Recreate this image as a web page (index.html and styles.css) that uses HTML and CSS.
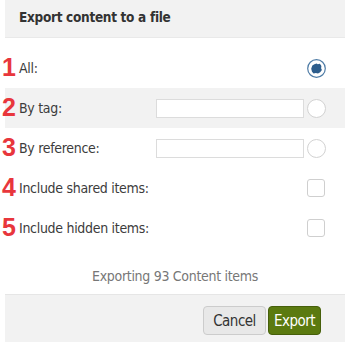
FILE: index.html
```html
<!DOCTYPE html>
<html>
<head>
<meta charset="utf-8">
<link rel="stylesheet" href="styles.css">
</head>
<body>
<div class="dialog">
  <div class="header"><span class="title">Export content to a file</span></div>
  <div class="body">
    <div class="row">
      <span class="num">1</span>
      <span class="label">All:</span>
      <svg class="radio" width="19" height="19" viewBox="0 0 19 19">
        <circle cx="9.5" cy="9.5" r="8.8" fill="#fff" stroke="#4f7ca6" stroke-width="1.2"/>
        <path d="M4.2 9.8 L5.3 6.6 L7.4 5.2 L9.6 4.4 L10.8 5.3 L12.9 4.8 L14.4 6.9 L14.1 9.2 L14.9 11 L13.2 13.2 L11 14.4 L8.9 14 L6.6 14.6 L5 12.7 Z" fill="#2d5d8c"/>
      </svg>
    </div>
    <div class="row alt">
      <span class="num">2</span>
      <span class="label">By tag:</span>
      <span class="input"></span>
      <span class="radio-off"></span>
    </div>
    <div class="row">
      <span class="num">3</span>
      <span class="label">By reference:</span>
      <span class="input"></span>
      <span class="radio-off"></span>
    </div>
    <div class="row">
      <span class="num">4</span>
      <span class="label">Include shared items:</span>
      <span class="check"></span>
    </div>
    <div class="row">
      <span class="num">5</span>
      <span class="label">Include hidden items:</span>
      <span class="check"></span>
    </div>
    <div class="status">Exporting 93 Content items</div>
  </div>
  <div class="footer">
    <button class="btn cancel">Cancel</button>
    <button class="btn export">Export</button>
  </div>
</div>
</body>
</html>
```

FILE: styles.css
```css
html, body {
  margin: 0;
  padding: 0;
  background: #fff;
}
body {
  font-family: "DejaVu Sans Condensed", "DejaVu Sans", sans-serif;
  font-stretch: condensed;
  font-size: 14px;
  letter-spacing: -0.3px;
  color: #3c3c3c;
}
.dialog {
  margin-left: 5px;
  width: 340px;
  height: 342px;
  display: flex;
  flex-direction: column;
}
.header {
  height: 38px;
  box-sizing: border-box;
  background: #f2f2f2;
  border-bottom: 1px solid #e9e9e9;
  padding: 8px 14px 0;
}
.title {
  font-weight: bold;
  font-size: 13.5px;
  color: #333;
  line-height: 18px;
}
.body {
  padding-top: 10px;
  flex: 1;
  display: flex;
  flex-direction: column;
}
.row {
  position: relative;
  height: 40px;
  display: flex;
  align-items: center;
  padding: 0 19px 0 14px;
}
.row.alt {
  background: #f2f2f2;
}
.num {
  position: absolute;
  left: -3px;
  top: 7px;
  font-family: "Liberation Sans", Arial, sans-serif;
  font-weight: bold;
  font-size: 25px;
  line-height: 25px;
  letter-spacing: 0;
  color: #e8363c;
}
.label {
  flex: 1;
}
.input {
  width: 148px;
  height: 19px;
  box-sizing: border-box;
  border: 1px solid #dcdcdc;
  background: #fff;
  margin-right: 3px;
}
.radio {
  display: block;
}
.radio-off {
  width: 19px;
  height: 19px;
  box-sizing: border-box;
  border: 1px solid #d2d2d2;
  border-radius: 50%;
  background: #fff;
}
.check {
  width: 18px;
  height: 18px;
  box-sizing: border-box;
  border: 1px solid #cfcfcf;
  border-radius: 3px;
  background: #fff;
  margin-right: 1px;
}
.status {
  text-align: center;
  color: #777;
  padding-top: 19px;
  line-height: 18px;
}
.footer {
  height: 48px;
  box-sizing: border-box;
  background: #f2f2f2;
  border-top: 1px solid #e6e6e6;
  display: flex;
  justify-content: flex-end;
  align-items: flex-start;
  gap: 2px;
  padding: 11px 24px 0 0;
}
.btn {
  height: 29px;
  box-sizing: border-box;
  font-family: inherit;
  font-stretch: condensed;
  font-size: 15px;
  letter-spacing: -0.5px;
  border-radius: 4px;
  padding: 0;
  cursor: pointer;
}
.cancel {
  width: 63px;
  background: #e8e8e8;
  border: 1px solid #cccccc;
  color: #333;
}
.export {
  width: 53px;
  background: #5b7a10;
  border: 1px solid #465f0b;
  color: #fff;
}
```
